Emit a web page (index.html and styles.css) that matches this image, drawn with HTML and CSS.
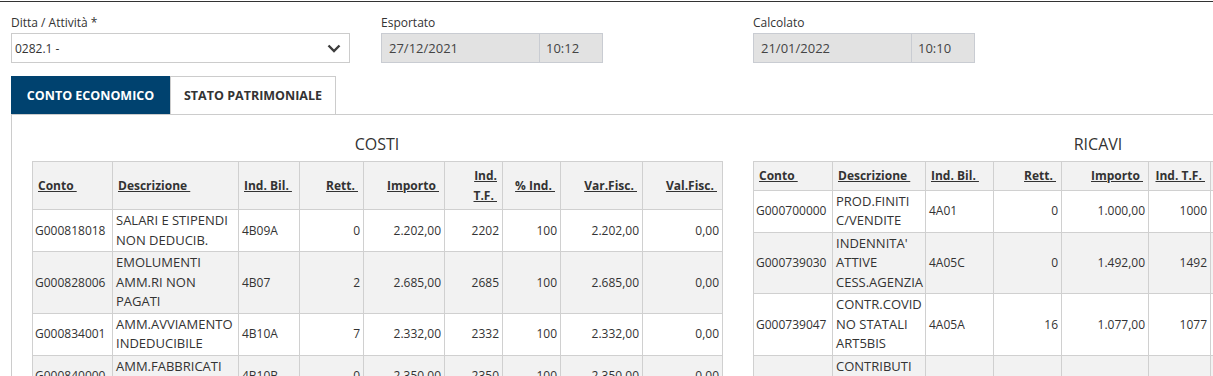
FILE: index.html
```html
<!DOCTYPE html>
<html lang="it">
<head>
<meta charset="utf-8">
<title>Conto economico</title>
<link rel="stylesheet" href="styles.css">
</head>
<body>
<div class="page">
  <div class="filters">
    <div class="field field-ditta">
      <label class="field-label">Ditta / Attività *</label>
      <div class="select-box">
        <span class="select-value">0282.1 -</span>
        <svg class="chevron" width="14" height="9" viewBox="0 0 14 9"><path d="M1.5 1.5 L7 7 L12.5 1.5" fill="none" stroke="#3d3d3d" stroke-width="2.4"/></svg>
      </div>
    </div>
    <div class="field field-date">
      <label class="field-label">Esportato</label>
      <div class="input-group">
        <span class="ig-date">27/12/2021</span>
        <span class="ig-time">10:12</span>
      </div>
    </div>
    <div class="field field-date">
      <label class="field-label">Calcolato</label>
      <div class="input-group">
        <span class="ig-date">21/01/2022</span>
        <span class="ig-time">10:10</span>
      </div>
    </div>
  </div>

  <div class="tabs">
    <button class="tab tab-active">CONTO ECONOMICO</button>
    <button class="tab">STATO PATRIMONIALE</button>
  </div>

  <div class="panel">
    <section class="block">
      <h3 class="block-title">COSTI</h3>
      <table class="grid grid-costi">
        <colgroup>
          <col style="width:80px"><col style="width:126px"><col style="width:61px"><col style="width:64px"><col style="width:81px"><col style="width:58px"><col style="width:58px"><col style="width:82px"><col style="width:80px">
        </colgroup>
        <thead>
          <tr>
            <th class="l"><a>Conto&nbsp;</a></th>
            <th class="l"><a>Descrizione&nbsp;</a></th>
            <th class="l"><a>Ind. Bil.&nbsp;</a></th>
            <th><a>Rett.&nbsp;</a></th>
            <th><a>Importo&nbsp;</a></th>
            <th><a>Ind. T.F.&nbsp;</a></th>
            <th><a>% Ind.&nbsp;</a></th>
            <th><a>Var.Fisc.&nbsp;</a></th>
            <th><a>Val.Fisc.&nbsp;</a></th>
          </tr>
        </thead>
        <tbody>
          <tr><td class="l">G000818018</td><td class="l desc">SALARI E STIPENDI NON DEDUCIB.</td><td class="l">4B09A</td><td>0</td><td>2.202,00</td><td>2202</td><td>100</td><td>2.202,00</td><td>0,00</td></tr>
          <tr><td class="l">G000828006</td><td class="l desc">EMOLUMENTI AMM.RI NON PAGATI</td><td class="l">4B07</td><td>2</td><td>2.685,00</td><td>2685</td><td>100</td><td>2.685,00</td><td>0,00</td></tr>
          <tr><td class="l">G000834001</td><td class="l desc">AMM.AVVIAMENTO INDEDUCIBILE</td><td class="l">4B10A</td><td>7</td><td>2.332,00</td><td>2332</td><td>100</td><td>2.332,00</td><td>0,00</td></tr>
          <tr><td class="l">G000840000</td><td class="l desc">AMM.FABBRICATI INDEDUCIBILI</td><td class="l">4B10B</td><td>0</td><td>2.350,00</td><td>2350</td><td>100</td><td>2.350,00</td><td>0,00</td></tr>
          <tr><td class="l">G000850000</td><td class="l desc">SPESE DI RAPPRESENTANZA</td><td class="l">4B12</td><td>0</td><td>1.100,00</td><td>1100</td><td>100</td><td>1.100,00</td><td>0,00</td></tr>
        </tbody>
      </table>
    </section>
    <section class="block">
      <h3 class="block-title">RICAVI</h3>
      <table class="grid grid-ricavi">
        <colgroup>
          <col style="width:79px"><col style="width:93px"><col style="width:68px"><col style="width:68px"><col style="width:87px"><col style="width:62px"><col style="width:60px"><col style="width:86px"><col style="width:87px">
        </colgroup>
        <thead>
          <tr>
            <th class="l"><a>Conto&nbsp;</a></th>
            <th class="l"><a>Descrizione&nbsp;</a></th>
            <th class="l"><a>Ind. Bil.&nbsp;</a></th>
            <th><a>Rett.&nbsp;</a></th>
            <th><a>Importo&nbsp;</a></th>
            <th><a>Ind.&nbsp;T.F.&nbsp;</a></th>
            <th><a>% Ind.&nbsp;</a></th>
            <th><a>Var.Fisc.&nbsp;</a></th>
            <th><a>Val.Fisc.&nbsp;</a></th>
          </tr>
        </thead>
        <tbody>
          <tr><td class="l">G000700000</td><td class="l desc">PROD.FINITI C/VENDITE</td><td class="l">4A01</td><td>0</td><td>1.000,00</td><td>1000</td><td>100</td><td>1.000,00</td><td>0,00</td></tr>
          <tr><td class="l">G000739030</td><td class="l desc">INDENNITA' ATTIVE CESS.AGENZIA</td><td class="l">4A05C</td><td>0</td><td>1.492,00</td><td>1492</td><td>100</td><td>1.492,00</td><td>0,00</td></tr>
          <tr><td class="l">G000739047</td><td class="l desc">CONTR.COVID NO STATALI ART5BIS</td><td class="l">4A05A</td><td>16</td><td>1.077,00</td><td>1077</td><td>100</td><td>1.077,00</td><td>0,00</td></tr>
          <tr><td class="l">G000739050</td><td class="l desc">CONTRIBUTI C/ESERCIZIO ALTRI ENTI</td><td class="l">4A05B</td><td>0</td><td>1.200,00</td><td>1200</td><td>100</td><td>1.200,00</td><td>0,00</td></tr>
          <tr><td class="l">G000740000</td><td class="l desc">PROVENTI DIVERSI</td><td class="l">4A05</td><td>0</td><td>980,00</td><td>980</td><td>100</td><td>980,00</td><td>0,00</td></tr>
        </tbody>
      </table>
    </section>
  </div>
</div>
</body>
</html>
```

FILE: styles.css
```css
html, body {
  margin: 0;
  padding: 0;
  overflow: hidden;
  background: #fff;
}
body {
  font-family: "Open Sans", "Noto Sans", "Liberation Sans", sans-serif;
  font-size: 12px;
  color: #333;
}
.page {
  margin-top: 1px;
  border-top: 1px solid #333;
  padding: 12px 0 0 11px;
  width: 1500px;
}
.filters {
  display: grid;
  grid-template-columns: 370px 372px 372px;
}
.field {
  display: flex;
  flex-direction: column;
}
.field-label {
  font-size: 12px;
  line-height: 18px;
  height: 18px;
  margin-bottom: 1px;
  color: #333;
}
.select-box {
  width: 339px;
  height: 30px;
  box-sizing: border-box;
  border: 1px solid #ccc;
  display: flex;
  align-items: center;
  justify-content: space-between;
  padding: 0 8px 0 3px;
  font-size: 12px;
}
.chevron { display: block; }
.input-group {
  width: 222px;
  height: 30px;
  box-sizing: border-box;
  border: 1px solid #c9ccd2;
  background: #e2e2e2;
  display: flex;
  font-size: 13px;
  color: #444;
}
.ig-date {
  width: 158px;
  border-right: 1px solid #c9ccd2;
  padding-left: 7px;
  display: flex;
  align-items: center;
  box-sizing: border-box;
}
.ig-time {
  flex: 1;
  padding-left: 6px;
  display: flex;
  align-items: center;
}
.tabs {
  display: flex;
  margin-top: 13px;
}
.tab {
  font-family: inherit;
  font-size: 12.5px;
  font-weight: 700;
  height: 38px;
  box-sizing: border-box;
  border: 1px solid #ccc;
  border-bottom: none;
  background: #fff;
  color: #333;
  padding: 0;
  margin: 0;
  cursor: pointer;
}
.tab:first-child { width: 159px; }
.tab:last-child { width: 166px; }
.tab-active {
  background: #00426f;
  border-color: #00426f;
  color: #fff;
}
.panel {
  border-top: 1px solid #ccc;
  border-left: 1px solid #ccc;
  padding: 19px 0 0 20px;
  display: flex;
  gap: 31px;
}
.block {
  width: 690px;
  flex: none;
}
.block-title {
  margin: 0 0 7px;
  font-size: 16px;
  font-weight: 400;
  line-height: 20px;
  text-align: center;
  color: #333;
}
.grid {
  border-collapse: collapse;
  table-layout: fixed;
  width: 690px;
  font-size: 12px;
}
.grid th, .grid td {
  border: 1px solid #d0d0d0;
  vertical-align: middle;
  text-align: right;
  line-height: 19.5px;
}
.grid th {
  background: #f2f2f2;
  padding: 4px 5px;
  font-weight: 700;
}
.grid th a {
  text-decoration: underline;
  color: #333;
}
.grid td {
  padding: 1px 3px;
}
.grid td.desc { font-size: 13px; }
.grid .l { text-align: left; }
.grid td.l:first-child { padding-left: 2px; padding-right: 1px; }
.grid tbody tr:nth-child(even) td { background: #f2f2f2; }
```
